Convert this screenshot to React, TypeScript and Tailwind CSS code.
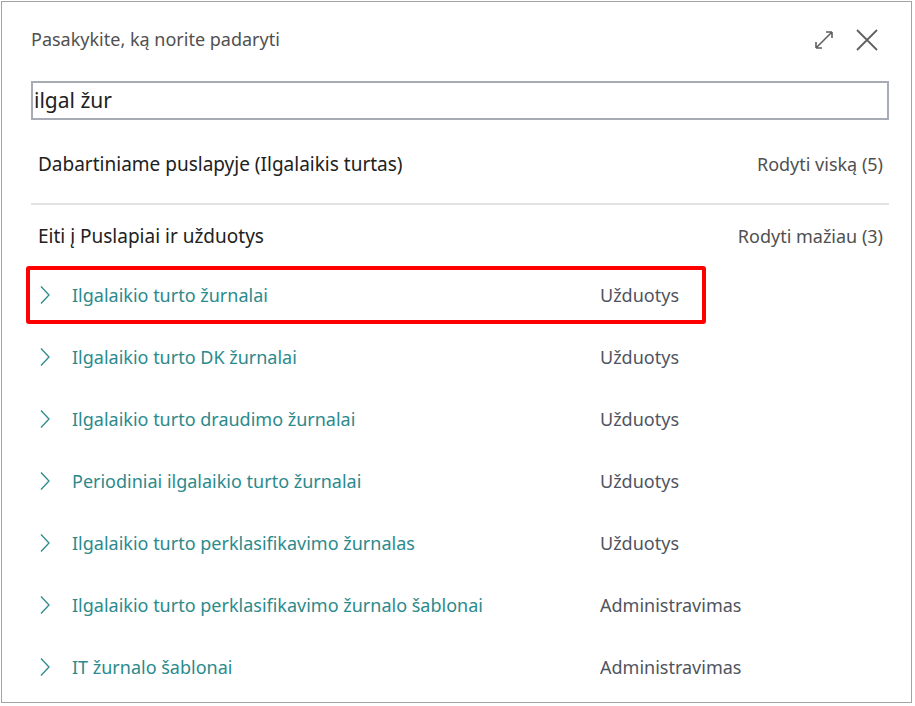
import React from "react";

const rows = [
  { name: "Ilgalaikio turto žurnalai", cat: "Užduotys", selected: true },
  { name: "Ilgalaikio turto DK žurnalai", cat: "Užduotys" },
  { name: "Ilgalaikio turto draudimo žurnalai", cat: "Užduotys" },
  { name: "Periodiniai ilgalaikio turto žurnalai", cat: "Užduotys" },
  { name: "Ilgalaikio turto perklasifikavimo žurnalas", cat: "Užduotys" },
  { name: "Ilgalaikio turto perklasifikavimo žurnalo šablonai", cat: "Administravimas" },
  { name: "IT žurnalo šablonai", cat: "Administravimas" },
];

const Chevron = () => (
  <svg width="10" height="20" viewBox="0 0 10 20" fill="none" className="shrink-0">
    <path d="M1 1.5 L9 10 L1 18.5" stroke="#2b8a8c" strokeWidth="1.3" />
  </svg>
);

const App = () => {
  return (
    <div className="w-[915px] h-[706px] bg-white font-['Noto_Sans',sans-serif]">
      <div className="ml-px mt-px w-[911px] h-[702px] border border-[#a3a3a3] bg-white">
        {/* Header */}
        <div className="flex items-center justify-between pl-[29px] pr-[32px] h-[79px] pb-[4px]">
          <span className="text-[18px] text-[#505050]">Pasakykite, ką norite padaryti</span>
          <div className="flex items-center gap-[20px]">
            <svg width="22" height="22" viewBox="0 0 22 22" fill="none">
              <path d="M3 19 L19 3 M3 19 L3 13 M3 19 L9 19 M19 3 L13 3 M19 3 L19 9" stroke="#606060" strokeWidth="1.6" />
            </svg>
            <svg width="24" height="24" viewBox="0 0 24 24" fill="none">
              <path d="M2 2 L22 22 M22 2 L2 22" stroke="#606060" strokeWidth="1.8" />
            </svg>
          </div>
        </div>

        {/* Search */}
        <div className="pl-[29px] pr-[22px]">
          <div className="h-[39px] border-2 border-[#a7abb3] flex items-center px-[1px]">
            <span className="text-[21px] text-[#212121]">ilgal žur</span>
          </div>
        </div>

        {/* Current page section */}
        <div className="ml-[29px] mr-[22px] flex items-center justify-between h-[85px] pt-[6px] border-b-2 border-[#e3e3e3] pl-[7px] pr-[6px]">
          <span className="text-[19px] text-[#212121]">Dabartiniame puslapyje (Ilgalaikis turtas)</span>
          <span className="text-[18px] text-[#505050]">Rodyti viską (5)</span>
        </div>

        {/* Go to section */}
        <div className="ml-[29px] mr-[22px] flex items-center justify-between h-[59px] pt-[4px] pl-[7px] pr-[6px]">
          <span className="text-[19px] text-[#212121]">Eiti į Puslapiai ir užduotys</span>
          <span className="text-[18px] text-[#505050]">Rodyti mažiau (3)</span>
        </div>

        <div className="flex flex-col">
          {rows.map((r, i) => (
            <div key={i} className="h-[62px] flex items-center pl-[24px]">
              <div
                className={
                  "w-[680px] h-[58px] shrink-0 flex items-center rounded-[3px] border-4 " +
                  (r.selected ? "border-[#ff0000]" : "border-transparent")
                }
              >
                <div className="w-[42px] shrink-0 pl-[10px]">
                  <Chevron />
                </div>
                <span className="w-[528px] shrink-0 text-[18px] text-[#2b8a8c] whitespace-nowrap">{r.name}</span>
                <span className="shrink-0 text-[18px] text-[#505460] whitespace-nowrap">{r.cat}</span>
              </div>
            </div>
          ))}
        </div>
      </div>
    </div>
  );
};

export default App;
